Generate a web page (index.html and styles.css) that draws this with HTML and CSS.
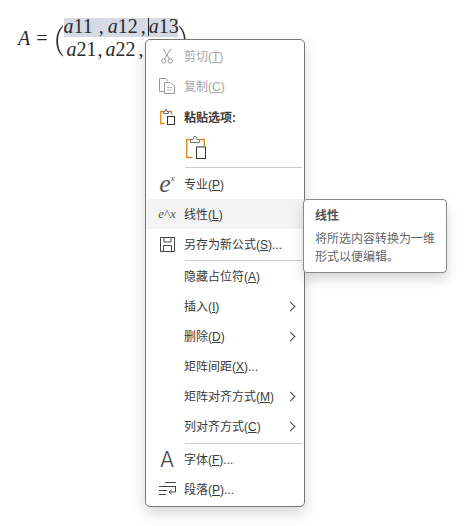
FILE: index.html
```html
<!DOCTYPE html>
<html lang="zh-CN">
<head>
    <meta charset="UTF-8">
    <title>公式菜单</title>
    <link rel="stylesheet" href="styles.css">
</head>
<body>
    <div class="formula">
        <span class="var">A</span>
        <span class="equals">=</span>
        <svg class="paren" width="8" height="32" viewBox="0 0 8 32"><path d="M6.800 0.500C2.500 4 0.300 9.500 0.300 16s2.200 12 6.500 15.500l.6-.6C3.800 27 2 22 2 16S3.800 5 7.400 1.100z" fill="#333"/></svg>
        <div class="matrix">
            <div class="line"><span class="selected"><i>a</i>11<span class="comma wide">,</span><i>a</i>12<span class="comma">,</span><span class="caret"></span><i>a</i>13</span></div>
            <div class="line second"><i>a</i>21<span class="comma tight">,</span><i>a</i>22<span class="comma">,</span></div>
        </div>
        <svg class="paren" width="8" height="32" viewBox="0 0 8 32"><path d="M1.200 0.500C5.500 4 7.700 9.500 7.700 16s-2.200 12-6.500 15.500l-.6-.6C4.200 27 6 22 6 16S4.200 5 .6 1.100z" fill="#333"/></svg>
    </div>

    <div class="menu">
        <div class="row disabled">
            <span class="icon">
                <svg width="12" height="16" viewBox="0 0 12 16" fill="none" stroke="#9a9a9a"><path d="M2 .5l6.500 10.500M10 .5L3.500 11"/><circle cx="2.700" cy="13" r="2.200"/><circle cx="9.300" cy="13" r="2.200"/></svg>
            </span>
            <span class="label">剪切(<u>T</u>)</span>
        </div>
        <div class="row disabled">
            <span class="icon">
                <svg width="16" height="16" viewBox="0 0 16 16" fill="none" stroke="#9a9a9a"><path d="M5 13.500H.5V.5H7l2 2.500"/><path d="M5.500 4.500h6l4 4v7h-10z"/><path d="M8 9.500h5M8 12h5" stroke="#b5b5b5"/></svg>
            </span>
            <span class="label">复制(<u>C</u>)</span>
        </div>
        <div class="row paste-title">
            <span class="icon">
                <svg width="15" height="16" viewBox="0 0 15 16" fill="none"><path d="M8 2.500h3.500v3.500M4.500 14.500H.7V2.500h3" stroke="#d98a1f" stroke-width="1.300"/><path d="M3.500 4.500v-2h1.500l.5-2h1l.5 2h1.500v2z" stroke="#666" fill="#fff"/><rect x="7.500" y="7.500" width="7" height="8" stroke="#333" fill="#fff"/></svg>
            </span>
            <span class="label bold">粘贴选项:</span>
        </div>
        <div class="row paste-row">
            <svg width="20" height="23" viewBox="0 0 20 23" fill="none"><path d="M14 3.500h4.300V10M6.500 21.500H.8V3.500H5" stroke="#d98a1f" stroke-width="1.400"/><path d="M4.500 6.500v-3h2.500l1-3h2l1 3h2.500v3z" stroke="#777" fill="#fff"/><rect x="10.500" y="11" width="9" height="11.500" stroke="#333" fill="#fff"/></svg>
        </div>
        <div class="sep gap-after"></div>
        <div class="row">
            <span class="icon math-big"><i>e</i><sup>x</sup></span>
            <span class="label">专业(<u>P</u>)</span>
        </div>
        <div class="row active">
            <span class="icon math-small"><i>e</i><span>^</span><i>x</i></span>
            <span class="label">线性(<u>L</u>)</span>
        </div>
        <div class="row">
            <span class="icon">
                <svg width="15" height="15" viewBox="0 0 15 15" fill="none" stroke="#444"><path d="M.5.5h14v14H.5z"/><path d="M4 .5v4.500h7V.5M3.500 14.500V8.500h8v6"/></svg>
            </span>
            <span class="label">另存为新公式(<u>S</u>)...</span>
        </div>
        <div class="sep"></div>
        <div class="row"><span class="icon"></span><span class="label">隐藏占位符(<u>A</u>)</span></div>
        <div class="row"><span class="icon"></span><span class="label">插入(<u>I</u>)</span><span class="arrow"></span></div>
        <div class="row"><span class="icon"></span><span class="label">删除(<u>D</u>)</span><span class="arrow"></span></div>
        <div class="row"><span class="icon"></span><span class="label">矩阵间距(<u>X</u>)...</span></div>
        <div class="row"><span class="icon"></span><span class="label">矩阵对齐方式(<u>M</u>)</span><span class="arrow"></span></div>
        <div class="row"><span class="icon"></span><span class="label">列对齐方式(<u>C</u>)</span><span class="arrow"></span></div>
        <div class="sep gap-before"></div>
        <div class="row">
            <span class="icon font-a">A</span>
            <span class="label">字体(<u>F</u>)...</span>
        </div>
        <div class="row">
            <span class="icon">
                <svg width="17" height="14" viewBox="0 0 17 14" fill="none" stroke="#444"><path d="M6 .5h11M0 4.500h17M0 8.500h8M0 12.500h7"/><path d="M16.500 4.500v5.500h-6M12.500 8l-2.500 2 2.500 2"/></svg>
            </span>
            <span class="label">段落(<u>P</u>)...</span>
        </div>
    </div>

    <div class="tooltip">
        <div class="tip-title">线性</div>
        <div class="tip-text">将所选内容转换为一维<br>形式以便编辑。</div>
    </div>
</body>
</html>
```

FILE: styles.css
```css
body {
    margin: 0;
    background-color: #fff;
    color: #333;
    font-family: "Liberation Sans", "Noto Sans CJK SC", sans-serif;
    font-size: 12px;
}

/* Formula */
.formula {
    display: flex;
    align-items: center;
    padding: 18px 0 0 18px;
    font-family: "Liberation Serif", serif;
    font-size: 20px;
    line-height: 17px;
    color: #2b2b2b;
}
.var {
    font-style: italic;
    margin-bottom: 5px;
}
.equals {
    margin-left: 6px;
    margin-bottom: 5px;
}
.paren {
    flex: none;
}
.formula .paren:first-of-type {
    margin-left: 8px;
}
.matrix {
    width: 114px;
}
.line {
    height: 23px;
    white-space: nowrap;
}
.line.second {
    padding-left: 3px;
}
.selected {
    display: block;
    height: 19px;
    background-color: #d5dae5;
}
.comma {
    margin: 0 2px 0 3px;
}
.comma.wide {
    margin: 0 4px 0 6px;
}
.comma.tight {
    margin: 0 3px 0 1px;
}
.caret {
    display: inline-block;
    width: 1px;
    height: 18px;
    margin-right: 0;
    background-color: #222;
    vertical-align: top;
}

/* Context menu */
.menu {
    position: absolute;
    left: 145px;
    top: 39px;
    width: 158px;
    height: 465px;
    padding-top: 1px;
    background-color: #fff;
    border: 1px solid #777;
    border-radius: 5px;
    box-shadow: 0 6px 14px rgba(0, 0, 0, 0.16);
}
.row {
    display: flex;
    align-items: center;
    height: 30px;
    color: #3a3a3a;
}
.row.disabled {
    color: #a6a6a6;
}
.row.active {
    background-color: #f3f3f3;
}
.row.paste-title {
    margin-top: 1px;
}
.row.paste-row {
    box-sizing: border-box;
    height: 34px;
    padding: 0 0 3px 40px;
}
.icon {
    display: flex;
    align-items: center;
    justify-content: center;
    flex: none;
    box-sizing: border-box;
    width: 38px;
    height: 100%;
    padding-left: 4px;
}
.label {
    flex: 1;
    margin-bottom: 2px;
    white-space: nowrap;
}
.bold {
    font-weight: bold;
}
.sep {
    height: 1px;
    margin: 1px 2px 0 39px;
    background-color: #ccc;
}
.sep.gap-after {
    margin-bottom: 1px;
}
.sep.gap-before {
    margin-top: 2px;
}
.arrow {
    width: 6px;
    height: 6px;
    margin-right: 10px;
    border-top: 1px solid #444;
    border-right: 1px solid #444;
    transform: rotate(45deg);
}
.math-big {
    font-family: "Liberation Serif", serif;
    font-size: 26px;
    color: #555;
}
.math-big sup {
    font-size: 9px;
    font-style: italic;
    margin-bottom: 12px;
}
.math-small {
    font-family: "Liberation Serif", serif;
    font-size: 13px;
    color: #555;
}
.font-a {
    font-family: "Inter", sans-serif;
    font-size: 21px;
    font-weight: 300;
    color: #444;
}

/* Tooltip */
.tooltip {
    position: absolute;
    left: 303px;
    top: 199px;
    width: 144px;
    height: 74px;
    box-sizing: border-box;
    padding: 9px 0 0 11px;
    background-color: #fff;
    border: 1px solid #8a8a8a;
    border-radius: 4px;
    box-shadow: 0 6px 12px rgba(0, 0, 0, 0.16);
    color: #555;
    white-space: nowrap;
}
.tip-title {
    font-weight: bold;
    line-height: 15px;
    margin-bottom: 6px;
}
.tip-text {
    line-height: 18px;
    color: #666;
}
```
